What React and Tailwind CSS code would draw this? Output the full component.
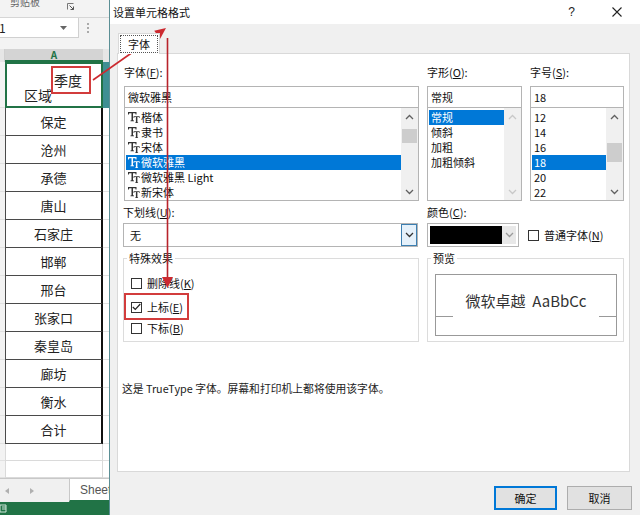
const rows = ['保定', '沧州', '承德', '唐山', '石家庄', '邯郸', '邢台', '张家口', '秦皇岛', '廊坊', '衡水', '合计'];

function Sheet() {
  return (
    <div className="w-[109px] shrink-0 flex flex-col bg-white">
      <div className="h-[18px] bg-[#f3f3f3] border-b border-[#d6d6d6] flex items-start overflow-hidden">
        <span className="text-[10px] leading-none text-[#666] ml-[10px] -mt-[3px]">剪贴板</span>
        <svg className="ml-[27px] mt-[3px]" width="7" height="7" viewBox="0 0 7 7">
          <path d="M0.5 6.5 V0.5 H6.5" stroke="#777" fill="none" strokeWidth="1" />
          <path d="M2.5 2.5 L6.5 6.5 M6.5 3.5 V6.5 H3.5" stroke="#555" fill="none" strokeWidth="1" />
        </svg>
      </div>
      <div className="h-[20px] flex bg-white">
        <div className="w-[79px] border-r border-b border-[#d0d0d0] flex items-center">
          <span className="text-[12px] leading-none text-[#222] -ml-[1px]">1</span>
          <svg className="ml-auto mr-[11px]" width="7" height="4" viewBox="0 0 7 4">
            <path d="M0 0 H7 L3.5 4 Z" fill="#666" />
          </svg>
        </div>
        <div className="flex-1 bg-[#f3f3f3] flex items-center pl-[8px]">
          <span className="flex flex-col gap-[2px]">
            <span className="w-[2px] h-[2px] bg-[#aaa]" />
            <span className="w-[2px] h-[2px] bg-[#aaa]" />
            <span className="w-[2px] h-[2px] bg-[#aaa]" />
          </span>
        </div>
      </div>
      <div className="h-[11px] bg-[#f3f3f3]" />
      <div className="h-[13px] flex">
        <div className="w-[5px] bg-[#e6e6e6] border-r border-[#cfcfcf]" />
        <div className="w-[98px] bg-[#d4d4d4] border-b-2 border-[#217346] flex items-center justify-center text-[10px] leading-none text-[#217346] font-bold">A</div>
        <div className="flex-1 bg-[#e6e6e6]" />
      </div>
      <div className="h-[46px] flex">
        <div className="w-[5px] bg-[#f3f3f3] border-b border-[#e1e1e1]" />
        <div className="w-[98px] border-2 border-[#217346] flex items-start text-[14px] leading-none text-[#222]">
          <span className="mt-[24px] ml-[17px]">区域</span>
          <span className="mt-[9px] ml-[2px]">季度</span>
        </div>
        <div className="flex-1 bg-[#3f8f93]" />
      </div>
      {rows.map((r) => (
        <div key={r} className="h-[28px] flex">
          <div className="w-[5px] bg-[#f3f3f3] border-b border-[#e1e1e1]" />
          <div className="w-[98px] border-l border-b border-[#4a4a4a] border-r-2 border-r-[#111] flex items-center justify-center text-[13px] leading-none text-[#222]">
            {r}
          </div>
          <div className="flex-1 border-b border-[#e1e1e1] bg-white" />
        </div>
      ))}
      {[0, 1].map((i) => (
        <div key={i} className="h-[17px] flex">
          <div className="w-[5px] bg-[#f3f3f3] border-b border-[#e1e1e1]" />
          <div className="w-[98px] border-l border-r border-b border-[#dadada]" />
          <div className="flex-1 border-b border-[#e1e1e1]" />
        </div>
      ))}
      <div className="h-[24px] flex bg-[#f0f0f0] border-t border-[#c8c8c8]">
        <div className="w-[69px] flex items-center">
          <svg className="ml-[5px]" width="4" height="6" viewBox="0 0 4 6"><path d="M4 0 V6 L0 3 Z" fill="#b0b0b0" /></svg>
          <svg className="ml-[21px]" width="4" height="6" viewBox="0 0 4 6"><path d="M0 0 V6 L4 3 Z" fill="#b0b0b0" /></svg>
        </div>
        <div className="flex-1 bg-white border-l border-[#c8c8c8] border-b-2 border-b-[#217346] flex items-center pl-[10px] overflow-hidden">
          <span className="text-[12px] leading-none text-[#555] font-['Liberation_Sans',sans-serif] whitespace-nowrap">Sheet1</span>
        </div>
      </div>
      <div className="h-[13px] bg-[#217346] flex items-center">
        <svg width="8" height="9" viewBox="0 0 8 9"><path d="M0 1 H6 V8 H0 Z M2 3 H6 M2 5 H6" stroke="#cfe6d8" fill="none" strokeWidth="1" /></svg>
      </div>
    </div>
  );
}

function TT({ white }) {
  const c = white ? '#ffffff' : '#333333';
  return (
    <svg className="ml-[2px] mr-[1px] shrink-0" width="12" height="11" viewBox="0 0 12 11">
      <path d="M0 0 H8.5 V2.6 H7.6 L7.3 1.3 H5 V8.2 L6 8.6 V9.2 H2.5 V8.6 L3.5 8.2 V1.3 H1.2 L0.9 2.6 H0 Z" fill={c} />
      <path d="M5.6 4.2 H11.6 V6 H11 L10.8 5 H9.4 V10.2 L10.1 10.4 V11 H7.2 V10.4 L7.9 10.2 V5 H6.4 L6.2 6 H5.6 Z" fill={c} />
    </svg>
  );
}

function Up({ c }) {
  return (
    <svg width="9" height="6" viewBox="0 0 9 6"><path d="M1 5 L4.5 1.5 L8 5" stroke={c} fill="none" strokeWidth="1.3" /></svg>
  );
}
function Down({ c }) {
  return (
    <svg width="9" height="6" viewBox="0 0 9 6"><path d="M1 1 L4.5 4.5 L8 1" stroke={c} fill="none" strokeWidth="1.3" /></svg>
  );
}

function Scroll({ kind }) {
  const c = kind === 'off' ? '#c8c8c8' : '#606060';
  return (
    <div className="w-[17px] bg-[#f0f0f0] flex flex-col">
      <div className="h-[17px] flex items-center justify-center"><Up c={c} /></div>
      <div className="flex-1 flex flex-col items-center">
        {kind === 'font' && <div className="mt-[4px] w-[15px] h-[14px] bg-[#cdcdcd]" />}
        {kind === 'size' && <div className="mt-[18px] w-[15px] h-[19px] bg-[#cdcdcd]" />}
      </div>
      <div className="h-[17px] flex items-center justify-center"><Down c={c} /></div>
    </div>
  );
}

function ListBox({ items, sel, icon, kind }) {
  return (
    <div className="-mt-px h-[94px] border border-[#b4b4b4] bg-white flex">
      <div className="flex-1 pt-[2px] pl-px flex flex-col">
        {items.map((it, i) => (
          <div
            key={it}
            className={
              i === sel
                ? 'h-[15px] flex items-center bg-[#0078d7] text-white text-[11px] leading-none whitespace-nowrap'
                : 'h-[15px] flex items-center text-[#111] text-[11px] leading-none whitespace-nowrap'
            }
          >
            {icon && <TT white={i === sel} />}
            <span className={icon ? '' : 'pl-[2px]'}>{it}</span>
          </div>
        ))}
      </div>
      <Scroll kind={kind} />
    </div>
  );
}

function Label({ t, k, rest }) {
  return (
    <span>
      {t}(<span className="underline">{k}</span>){rest}
    </span>
  );
}

function Input({ v }) {
  return (
    <div className="h-[22px] border border-[#b4b4b4] bg-white flex items-center pl-[3px] text-[11px] leading-none text-[#111]">{v}</div>
  );
}

function Box({ checked }) {
  return (
    <span className="w-[11px] h-[11px] border border-[#333] bg-white flex items-center justify-center shrink-0">
      {checked && (
        <svg width="9" height="8" viewBox="0 0 9 8"><path d="M0.8 4 L3.3 6.5 L8.3 1" stroke="#222" fill="none" strokeWidth="1.2" /></svg>
      )}
    </span>
  );
}

function Dialog() {
  return (
    <div className="flex-1 flex flex-col bg-[#f0f0f0] border-l border-[#5b8f95] text-[#111]">
      <div className="h-[24px] bg-white flex items-center">
        <span className="pl-[3px] text-[11px] leading-none">设置单元格格式</span>
        <span className="ml-auto mr-[37px] text-[12px] leading-none font-['Liberation_Sans',sans-serif] text-[#222]">?</span>
        <svg className="mr-[18px]" width="10" height="10" viewBox="0 0 10 10"><path d="M0.5 0.5 L9.5 9.5 M9.5 0.5 L0.5 9.5" stroke="#222" strokeWidth="1.1" /></svg>
      </div>
      <div className="mt-[9px] pl-[8px] flex">
        <div className="relative z-10 -mb-px h-[21px] w-[42px] bg-white border border-b-0 border-[#d9d9d9] p-[1px]">
          <div className="w-full h-full border border-dotted border-[#555] flex items-center justify-center text-[11px] leading-none">字体</div>
        </div>
      </div>
      <div className="ml-[7px] w-[513px] h-[419px] bg-white border border-[#d9d9d9] flex flex-col">
        <div className="pt-[12px] pl-[6px] flex gap-[8px]">
          <div className="w-[295px] flex flex-col">
            <div className="h-[20px] text-[11px] leading-none pt-[1px]"><Label t="字体" k="F" rest=":" /></div>
            <Input v="微软雅黑" />
            <ListBox icon kind="font" sel={3} items={['楷体', '隶书', '宋体', '微软雅黑', '微软雅黑 Light', '新宋体']} />
          </div>
          <div className="w-[95px] flex flex-col">
            <div className="h-[20px] text-[11px] leading-none pt-[1px]"><Label t="字形" k="O" rest=":" /></div>
            <Input v="常规" />
            <ListBox kind="off" sel={0} items={['常规', '倾斜', '加粗', '加粗倾斜', ' ', '  ']} />
          </div>
          <div className="w-[94px] flex flex-col">
            <div className="h-[20px] text-[11px] leading-none pt-[1px]"><Label t="字号" k="S" rest=":" /></div>
            <Input v="18" />
            <ListBox kind="size" sel={3} items={['12', '14', '16', '18', '20', '22']} />
          </div>
        </div>
        <div className="mt-[6px] pl-[5px] flex gap-[9px]">
          <div className="w-[295px] flex flex-col">
            <div className="h-[16px] text-[11px] leading-none"><Label t="下划线" k="U" rest=":" /></div>
            <div className="h-[24px] border border-[#b4b4b4] bg-white flex">
              <div className="flex-1 flex items-center pl-[6px] text-[11px] leading-none">无</div>
              <div className="w-[16px] border border-[#3c7fb1] bg-[#e5f1fb] flex items-center justify-center"><Down c="#333" /></div>
            </div>
          </div>
          <div className="w-[92px] flex flex-col">
            <div className="h-[16px] text-[11px] leading-none"><Label t="颜色" k="C" rest=":" /></div>
            <div className="h-[24px] border border-[#b4b4b4] bg-white flex p-[2px]">
              <div className="flex-1 bg-black" />
              <div className="w-[14px] bg-[#e8e8e8] flex items-center justify-center"><Down c="#9a9a9a" /></div>
            </div>
          </div>
          <div className="flex flex-col">
            <div className="h-[16px]" />
            <div className="h-[24px] flex items-center gap-[5px] text-[11px] leading-none">
              <Box />
              <Label t="普通字体" k="N" rest="" />
            </div>
          </div>
        </div>
        <div className="mt-[4px] pl-[5px] flex gap-[8px]">
          <fieldset className="w-[296px] h-[91px] border border-[#dcdcdc] flex flex-col">
            <legend className="ml-[3px] px-[2px] text-[11px] leading-[14px]">特殊效果</legend>
            <div className="pl-[7px] pt-[7px] flex flex-col text-[11px] leading-none">
              <div className="h-[22px] flex items-center gap-[5px]"><Box /><Label t="删除线" k="K" rest="" /></div>
              <div className="h-[26px] flex items-center gap-[5px]"><Box checked /><Label t="上标" k="E" rest="" /></div>
              <div className="h-[16px] flex items-center gap-[5px]"><Box /><Label t="下标" k="B" rest="" /></div>
            </div>
          </fieldset>
          <fieldset className="w-[197px] h-[91px] border border-[#dcdcdc] flex flex-col">
            <legend className="ml-[3px] px-[2px] text-[11px] leading-[14px]">预览</legend>
            <div className="ml-[7px] mt-[9px] w-[182px] h-[62px] border border-[#999] flex flex-col">
              <div className="h-[41px] pt-[17px] flex justify-center text-[15px] leading-[18px] text-[#333] whitespace-pre">微软卓越  AaBbCc</div>
              <div className="flex justify-between">
                <div className="w-[17px] h-px bg-[#999]" />
                <div className="w-[17px] h-px bg-[#999]" />
              </div>
            </div>
          </fieldset>
        </div>
        <div className="mt-[39px] pl-[4px] text-[10.8px] leading-[14px] text-[#222] whitespace-nowrap">
          这是 TrueType 字体。屏幕和打印机上都将使用该字体。
        </div>
      </div>
      <div className="mt-[14px] pr-[8px] flex justify-end gap-[10px]">
        <div className="w-[63px] h-[24px] border-2 border-[#0078d7] bg-[#e1e1e1] flex items-center justify-center text-[11px] leading-none">确定</div>
        <div className="w-[65px] h-[24px] border border-[#adadad] bg-[#e1e1e1] flex items-center justify-center text-[11px] leading-none">取消</div>
      </div>
    </div>
  );
}

function Annotations() {
  return (
    <svg className="absolute left-0 top-0 pointer-events-none" width="640" height="515" viewBox="0 0 640 515">
      <rect x="52" y="67" width="38" height="26" fill="none" stroke="#d23c3c" strokeWidth="2" />
      <rect x="125" y="294" width="63" height="25" fill="none" stroke="#d23c3c" strokeWidth="2" />
      <line x1="93" y1="80" x2="160" y2="33" stroke="#cc2a30" strokeWidth="1.6" />
      <polygon points="166,28 160.2,38.7 154.2,30.7" fill="#cc2a30" />
      <line x1="167.5" y1="38" x2="167.5" y2="279" stroke="#b8232b" strokeWidth="1.6" />
      <polygon points="162,277 173,277 167.5,288" fill="#cc2a30" />
    </svg>
  );
}

export default function App() {
  return (
    <div className="relative w-[640px] h-[515px] overflow-hidden flex bg-white font-['Noto_Sans_CJK_SC','Noto_Sans',sans-serif]">
      <Sheet />
      <Dialog />
      <Annotations />
    </div>
  );
}
